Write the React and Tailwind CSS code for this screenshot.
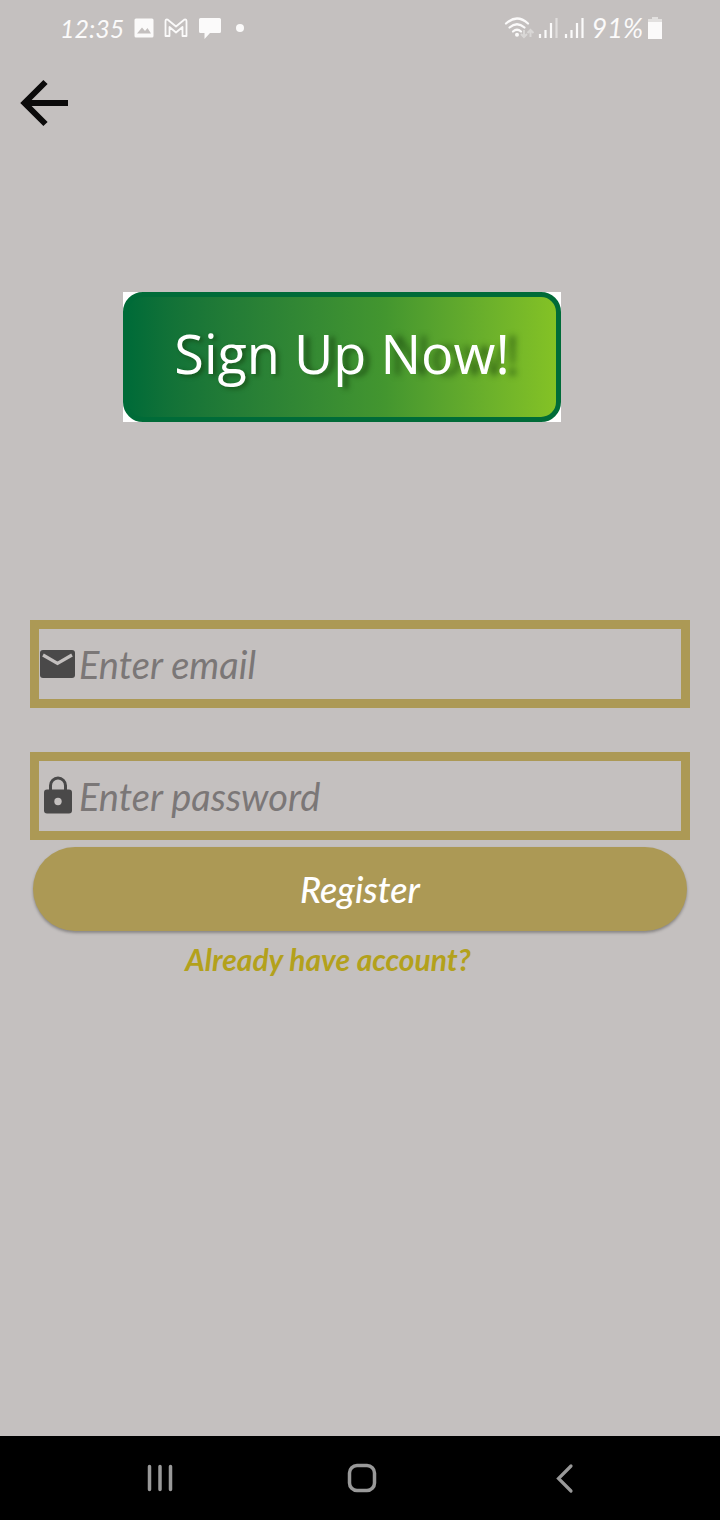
const hand = "font-['Lato','Open_Sans',sans-serif] italic";

function StatusBar() {
  return (
    <header className="flex h-14 items-center justify-between pr-[57px] pl-[60px] text-[#fbfafa]">
      <div className="flex items-center gap-2.5">
        <span className={`${hand} text-[25px] leading-8`}>12:35</span>
        <svg className="h-5 w-5" viewBox="0 0 20 20" aria-hidden="true">
          <path
            fill="currentColor"
            fillRule="evenodd"
            d="M2 .5h16q1.500 0 1.500 1.500v16q0 1.500-1.500 1.500H2q-1.500 0-1.500-1.500V2Q.5 .5 2 .5ZM3 15.500h14l-3.500-5.500-2.500 3-3-3.500Z"
          />
        </svg>
        <svg className="h-5 w-6" viewBox="0 0 24 20" fill="none" aria-hidden="true">
          <path
            stroke="currentColor"
            strokeWidth="1.800"
            strokeLinejoin="round"
            d="M1.500 18V3.500Q1.500 1 3.500 1.500L12 8.500 20.500 1.500Q22.500 1 22.500 3.500V18H18.500V9L12 14.500 5.500 9V18Z"
          />
        </svg>
        <svg className="h-6 w-6" viewBox="0 0 24 24" aria-hidden="true">
          <path fill="currentColor" d="M2.500 2h19Q23 2 23 3.500v12q0 1.500-1.500 1.500H12L6.500 23V17h-4Q1 17 1 15.500v-12Q1 2 2.500 2Z" />
        </svg>
        <span className="ml-1 h-2 w-2 rounded-full bg-current" />
      </div>
      <div className="flex items-center gap-1">
        <svg className="h-6 w-[30px]" viewBox="0 0 30 24" fill="none" aria-hidden="true">
          <g stroke="currentColor" strokeWidth="2.200" strokeLinecap="round">
            <path d="M2 7.500Q13-2.500 24 7.500M5.500 11.500q7.500-6.500 15 0M9 15.500q4-3.500 8 0" />
          </g>
          <circle cx="13" cy="18.800" r="2" fill="currentColor" />
          <g stroke="currentColor" strokeWidth="2" opacity=".4">
            <path d="M20 14v7m-3-3 3 3 3-3M26.500 21v-7m-3 3 3-3 3 3" />
          </g>
        </svg>
        <svg className="h-6 w-5" viewBox="0 0 20 24" fill="none" stroke="currentColor" strokeWidth="2.200" aria-hidden="true">
          <path d="M2 22v-4M7.500 22v-8M13 22V7" />
          <path d="M18.500 22V2" opacity=".5" />
        </svg>
        <svg className="ml-0.5 h-6 w-5" viewBox="0 0 20 24" fill="none" stroke="currentColor" strokeWidth="2.200" aria-hidden="true">
          <path d="M2 22v-4M7.500 22v-8M13 22V7M18.500 22V2" />
        </svg>
        <span className={`${hand} ml-1 text-[27px] leading-8`}>91%</span>
        <svg className="h-6 w-4" viewBox="0 0 16 24" fill="currentColor" aria-hidden="true">
          <path d="M5 1h6v2h4v3H1V3h4Z" opacity=".55" />
          <path d="M1 6h14v17H1Z" />
        </svg>
      </div>
    </header>
  );
}

function Field({ id, type, placeholder, icon }) {
  return (
    <div className="flex h-[88px] items-center border-[9px] border-[#ac9955]">
      <label htmlFor={id} className="shrink-0 text-[#4a4949]">
        {icon}
      </label>
      <input
        id={id}
        type={type}
        placeholder={placeholder}
        className={`${hand} h-full min-w-0 flex-1 bg-transparent pl-1 text-[38px] text-[#4a4949] outline-none placeholder:text-[#7b7777]`}
      />
    </div>
  );
}

const mailIcon = (
  <svg className="h-9 w-9" viewBox="0 0 36 36" role="img" aria-label="Email">
    <rect x="1" y="4" width="35" height="28" rx="3" fill="currentColor" />
    <path d="M4 9 18.500 17.500 33 9" fill="none" stroke="#c4c0bf" strokeWidth="3.200" />
  </svg>
);

const lockIcon = (
  <svg className="h-9 w-9 overflow-visible" viewBox="0 0 36 36" role="img" aria-label="Password">
    <path d="M11.500 13V7.500a7.500 7.500 0 0 1 15 0V13" fill="none" stroke="currentColor" strokeWidth="3" />
    <rect x="5" y="11.500" width="28" height="24" rx="3" fill="currentColor" />
    <circle cx="19" cy="23.500" r="3.700" fill="#c4c0bf" />
  </svg>
);

function NavBar() {
  return (
    <nav aria-label="System" className="flex h-[84px] justify-center pl-1 text-[#999]">
      <button type="button" aria-label="Recent apps" className="flex w-[202px] items-center justify-center">
        <svg className="h-7 w-7" viewBox="0 0 28 28" stroke="currentColor" strokeWidth="3.500" strokeLinecap="round" aria-hidden="true">
          <path d="M3.500 2.500v23M14 2.500v23M24.500 2.500v23" />
        </svg>
      </button>
      <button type="button" aria-label="Home" className="flex w-[202px] items-center justify-center">
        <svg className="h-8 w-8" viewBox="0 0 32 32" fill="none" stroke="currentColor" strokeWidth="3.500" aria-hidden="true">
          <rect x="3.500" y="3.500" width="25" height="25" rx="7.500" />
        </svg>
      </button>
      <button type="button" aria-label="Back" className="flex w-[202px] items-center justify-center">
        <svg className="h-8 w-8" viewBox="0 0 32 32" fill="none" stroke="currentColor" strokeWidth="3.200" strokeLinecap="round" aria-hidden="true">
          <path d="M23 4 10.500 16.500 23 29" />
        </svg>
      </button>
    </nav>
  );
}

export default function App() {
  return (
    <div className="flex min-h-screen flex-col bg-[#c4c0bf]">
      <StatusBar />
      <button type="button" aria-label="Go back" className="mt-5 ml-5 h-14 w-14 text-[#0c0b0b]">
        <svg className="h-14 w-14" viewBox="0 0 56 56" fill="none" stroke="currentColor" strokeWidth="6" aria-hidden="true">
          <path d="M48 27H5M25.500 6 4.500 27l21 21" />
        </svg>
      </button>
      <main className="flex flex-1 flex-col px-[30px]">
        <div className="mt-40 mr-9 self-center bg-white">
          <h1 className="flex h-[130px] w-[438px] items-center justify-center rounded-[20px] border-[5px] border-[#006b38] bg-linear-to-r from-[#006b38] via-[#43962f] via-60% to-[#84c225] pb-2 font-['Open_Sans','Noto_Sans',sans-serif] text-[54px] leading-none font-medium whitespace-pre text-white">
            <span className="[text-shadow:3px_2px_4px_rgba(20,60,10,0.6)]">Sign </span>
            <span className="[text-shadow:6px_2px_5px_rgba(20,60,10,0.6)]">Up </span>
            <span className="[text-shadow:10px_1px_6px_rgba(20,60,10,0.6)]">Now!</span>
          </h1>
        </div>
        <form className="mt-[198px] flex flex-col" onSubmit={(event) => event.preventDefault()}>
          <div className="flex flex-col gap-11">
            <Field id="email" type="email" placeholder="Enter email" icon={mailIcon} />
            <Field id="password" type="password" placeholder="Enter password" icon={lockIcon} />
          </div>
          <button
            type="submit"
            className={`${hand} mx-[3px] mt-[7px] h-[84px] rounded-full bg-[#ac9955] text-[36px] font-medium text-white shadow-[0_2px_3px_rgba(0,0,0,0.3)]`}
          >
            Register
          </button>
          <a href="#login" className={`${hand} mt-2 mr-16 self-center text-[30px] leading-10 font-bold text-[#b3a11c]`}>
            Already have account?
          </a>
        </form>
      </main>
      <div className="bg-black">
        <NavBar />
      </div>
    </div>
  );
}
